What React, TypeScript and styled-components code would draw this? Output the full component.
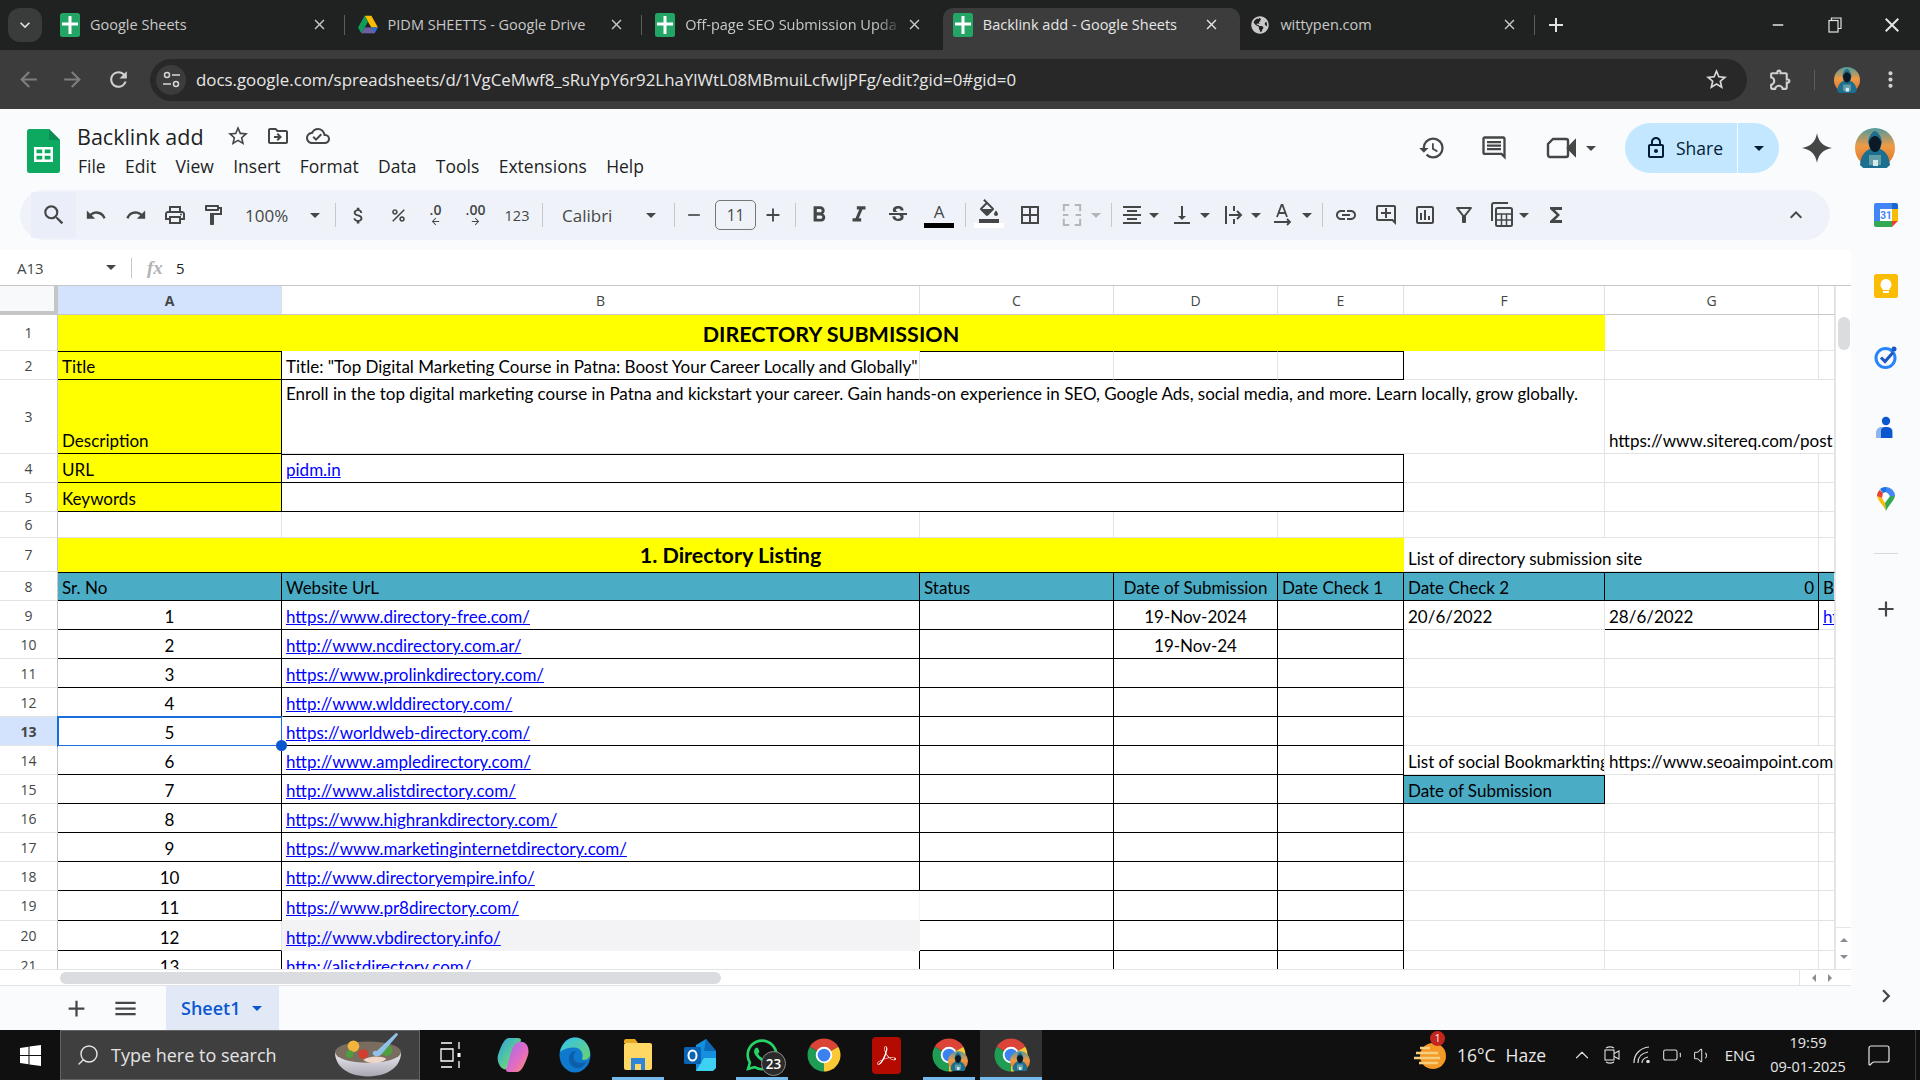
import { FC, ReactNode } from "react";
import styled, { createGlobalStyle } from "styled-components";
import { FaGlobeAmericas, FaWhatsapp } from "react-icons/fa";
import { SiAdobeacrobatreader } from "react-icons/si";
import {
  MdArrowBack,
  MdArrowForward,
  MdAttachMoney,
  MdBorderAll,
  MdClose,
  MdFormatAlignCenter,
  MdFormatBold,
  MdFormatColorFill,
  MdFormatItalic,
  MdStrikethroughS,
  MdFunctions,
  MdHistory,
  MdKeyboardArrowDown,
  MdKeyboardArrowRight,
  MdKeyboardArrowUp,
  MdLink,
  MdLockOutline,
  MdMenu,
  MdMoreVert,
  MdOutlineAddComment,
  MdOutlineCloudDone,
  MdOutlineComment,
  MdOutlineDriveFileMove,
  MdOutlineExtension,
  MdOutlineFilterAlt,
  MdOutlineFormatPaint,
  MdOutlineInsertChart,
  MdOutlinePrint,
  MdAdd,
  MdPercent,
  MdRedo,
  MdRefresh,
  MdRemove,
  MdSearch,
  MdStarOutline,
  MdUndo,
  MdVerticalAlignBottom,
} from "react-icons/md";
import { Battery, ChevronUp, MessageSquare, Search, Volume1 } from "lucide-react";

const GlobalStyle = createGlobalStyle`
  html, body {
    margin: 0;
    padding: 0;
    background: #f9fbfd;
  }
  * {
    box-sizing: border-box;
  }
`;

const UI_FONT = `"Open Sans", "Noto Sans", sans-serif`;
const SHEET_FONT = `Lato, "Liberation Sans", sans-serif`;

const Page = styled.div`
  width: 1920px;
  height: 1080px;
  display: flex;
  flex-direction: column;
  overflow: hidden;
  font-family: ${UI_FONT};
`;

/* browser tabs */
const TabStrip = styled.div`
  height: 50px;
  flex: none;
  display: flex;
  align-items: flex-end;
  padding-left: 8px;
  background: #202221;
`;

const TabListButton = styled.div`
  width: 34px;
  height: 34px;
  margin: 0 8px 8px 0;
  border-radius: 12px;
  background: #3a3b3b;
  color: #e3e3e3;
  display: flex;
  align-items: center;
  justify-content: center;
  font-size: 20px;
`;

const Tab = styled.div<{ $active?: boolean; $sep?: boolean }>`
  position: relative;
  width: 297.6px;
  height: 42px;
  flex: none;
  display: flex;
  align-items: center;
  padding: 0 20px 9px 10px;
  border-radius: 10px 10px 0 0;
  background: ${({ $active }) => ($active ? "#3c3c3c" : "transparent")};
  color: ${({ $active }) => ($active ? "#e6e6e6" : "#c8c8c8")};
  font-size: 14.5px;

  &::after {
    content: "";
    display: ${({ $sep }) => ($sep ? "block" : "none")};
    position: absolute;
    right: 3px;
    top: 7px;
    width: 1px;
    height: 20px;
    background: #5c5e5e;
  }
`;

const TabIcon = styled.div`
  width: 20px;
  height: 22px;
  flex: none;
  display: flex;
  align-items: center;
  justify-content: center;
  margin-right: 10px;
`;

const TabTitle = styled.div<{ $fade?: boolean }>`
  flex: 1;
  white-space: nowrap;
  overflow: hidden;
  mask-image: ${({ $fade }) =>
    $fade ? "linear-gradient(to right, #000 88%, transparent)" : "none"};
`;

const TabClose = styled(MdClose)`
  flex: none;
  font-size: 17px;
  margin-left: 4px;
`;

const NewTab = styled(MdAdd)`
  flex: none;
  color: #e3e3e3;
  font-size: 24px;
  margin: 0 0 13px 6px;
`;

const WindowControls = styled.div`
  margin-left: auto;
  height: 50px;
  display: flex;
  align-items: center;
  color: #e3e3e3;
`;

const WindowButton = styled.div`
  width: 57px;
  display: flex;
  justify-content: center;
  align-items: center;
`;

/* address bar */
const ChromeBar = styled.div`
  height: 59px;
  flex: none;
  display: flex;
  align-items: center;
  background: #3c3c3c;
  color: #c7c7c7;
`;

const NavButton = styled.div<{ $w: number; $dim?: boolean }>`
  width: ${({ $w }) => $w}px;
  flex: none;
  display: flex;
  justify-content: center;
  font-size: 25px;
  color: ${({ $dim }) => ($dim ? "#7d7e7e" : "#d0d0d0")};
`;

const Omnibox = styled.div`
  width: 1597px;
  height: 42px;
  flex: none;
  margin-left: 2px;
  display: flex;
  align-items: center;
  padding: 0 18px 0 6px;
  border-radius: 21px;
  background: #282828;
`;

const SiteButton = styled.div`
  width: 30px;
  height: 30px;
  border-radius: 50%;
  background: #3c3c3c;
  display: flex;
  align-items: center;
  justify-content: center;
  margin-right: 10px;
`;

const UrlText = styled.div`
  flex: 1;
  color: #e6e6e6;
  font-size: 16.85px;
  white-space: nowrap;
`;

const BarSep = styled.div`
  width: 1px;
  height: 20px;
  flex: none;
  background: #5c5e5e;
  margin: 0 19px 0 1px;
`;

/* sheets header */
const AppHeader = styled.div`
  height: 81px;
  flex: none;
  display: flex;
  align-items: center;
  padding: 3px 25px 0 27px;
  background: #f9fbfd;
  color: #444746;
`;

const TitleBlock = styled.div`
  margin-left: 17px;
  display: flex;
  flex-direction: column;
  gap: 0;
`;

const TitleRow = styled.div`
  display: flex;
  align-items: center;
  height: 30px;
  color: #444746;
  font-size: 24px;
`;

const DocTitle = styled.div`
  color: #1f1f1f;
  font-size: 21.5px;
  margin-right: 22px;
`;

const TitleIcon = styled.div`
  width: 40px;
  display: flex;
`;

const MenuBar = styled.div`
  display: flex;
  gap: 19.4px;
  padding-left: 1px;
  height: 30px;
  align-items: center;
  color: #1f1f1f;
  font-size: 17.5px;
`;

const HeaderRight = styled.div`
  margin-left: auto;
  margin-bottom: 6px;
  display: flex;
  align-items: center;
  color: #444746;
`;

const HeadIcon = styled.div<{ $w: number; $ml?: number }>`
  width: ${({ $w }) => $w}px;
  margin-left: ${({ $ml }) => $ml ?? 0}px;
  flex: none;
  display: flex;
  align-items: center;
  justify-content: center;
  font-size: 28px;
`;

const ShareButton = styled.div`
  width: 154px;
  height: 50px;
  margin-left: 26px;
  flex: none;
  display: flex;
  align-items: center;
  border-radius: 25px;
  background: #c2e7ff;
  color: #001d35;
  font-weight: 500;
`;

const ShareMain = styled.div`
  width: 113px;
  height: 100%;
  display: flex;
  align-items: center;
  gap: 8px;
  padding-left: 19px;
  border-right: 1px solid #f9fbfd;
  font-size: 17.5px;
`;

const ShareCaret = styled.div`
  flex: 1;
  display: flex;
  justify-content: center;
`;

/* body */
const Body = styled.div`
  flex: 1;
  min-height: 0;
  display: flex;
`;

const Main = styled.div`
  width: 1851px;
  display: flex;
  flex-direction: column;
`;

const Toolbar = styled.div`
  height: 50px;
  width: 1810px;
  margin-left: 20px;
  flex: none;
  display: flex;
  align-items: center;
  padding: 0 17px 0 11px;
  border-radius: 25px;
  background: #eff3f9;
  color: #444746;
  font-size: 22px;
`;

const Tool = styled.div<{
  $w: number;
  $pl?: number;
  $gap?: number;
  $muted?: boolean;
  $hl?: boolean;
  $push?: boolean;
}>`
  width: ${({ $w }) => $w}px;
  height: 46px;
  flex: none;
  display: flex;
  align-items: center;
  justify-content: ${({ $pl }) => ($pl === undefined ? "center" : "flex-start")};
  margin-left: ${({ $push }) => ($push ? "auto" : "0")};
  padding-left: ${({ $pl }) => $pl ?? 0}px;
  gap: ${({ $gap }) => $gap ?? 0}px;
  color: ${({ $muted }) => ($muted ? "#b4b7b9" : "#444746")};
  background: ${({ $hl }) => ($hl ? "#e9eef8" : "transparent")};
`;

const ToolText = styled.span<{ $size?: number }>`
  font-size: ${({ $size }) => $size ?? 17}px;
  font-family: ${UI_FONT};
  color: #444746;
`;

const ToolSep = styled.div<{ $w: number }>`
  width: ${({ $w }) => $w}px;
  flex: none;
  display: flex;
  justify-content: center;

  &::after {
    content: "";
    width: 1px;
    height: 24px;
    background: #c7c7c7;
  }
`;

const Caret = styled.span<{ $dark?: boolean }>`
  width: 0;
  height: 0;
  flex: none;
  border-left: 5px solid transparent;
  border-right: 5px solid transparent;
  border-top: 5px solid ${({ $dark }) => ($dark ? "#001d35" : "currentColor")};
`;

const SizeBox = styled.div`
  width: 41px;
  height: 30px;
  margin-left: 7px;
  flex: none;
  display: flex;
  align-items: center;
  justify-content: center;
  border: 1px solid #747775;
  border-radius: 5px;
  font-size: 15.5px;
`;

const ColorA = styled.div`
  display: flex;
  flex-direction: column;
  align-items: center;
  font-size: 17px;
  line-height: 19px;
  font-weight: 500;

  &::after {
    content: "";
    width: 30px;
    height: 5px;
    background: #000;
    margin-top: 2px;
  }
`;

const FillSwatch = styled.div`
  display: flex;
  flex-direction: column;
  align-items: center;
  margin-top: -4px;

  &::after {
    content: "";
    width: 30px;
    height: 5px;
    background: #fff;
  }
`;

const Decimal = styled.div`
  display: flex;
  flex-direction: column;
  align-items: center;
  font-size: 14px;
  line-height: 14px;
  font-weight: 600;

  svg {
    margin-top: -1px;
  }
`;

/* formula bar */
const FormulaBar = styled.div`
  height: 36px;
  margin-top: 10px;
  flex: none;
  display: flex;
  align-items: center;
  background: #fff;
  border-bottom: 1px solid #c4c7c5;
  color: #1f1f1f;
  font-size: 15px;
`;

const NameBox = styled.div`
  width: 132px;
  height: 20px;
  display: flex;
  align-items: center;
  justify-content: space-between;
  padding: 0 15px 0 17px;
  border-right: 1px solid #c7c7c7;
  color: #444746;
`;

const FxLabel = styled.span`
  margin-left: 15px;
  width: 29px;
  color: #b0b3b5;
  font-family: "Liberation Serif", serif;
  font-style: italic;
  font-weight: 700;
  font-size: 19px;
`;

/* grid */
const GridArea = styled.div`
  height: 683px;
  flex: none;
  display: flex;
  background: #fff;
`;

const GridClip = styled.div`
  width: 1835px;
  overflow: hidden;
`;

const SheetTable = styled.table`
  width: 1835px;
  table-layout: fixed;
  border-collapse: separate;
  border-spacing: 0;
  font-family: ${SHEET_FONT};
  font-size: 17px;
  color: #000;
`;

const ColHead = styled.th<{ $active?: boolean }>`
  height: 29px;
  padding: 0;
  background: ${({ $active }) => ($active ? "#d3e3fd" : "#fff")};
  border-right: 1px solid #e0e0e0;
  border-bottom: 1px solid #c4c7c5;
  color: #444746;
  font-family: ${UI_FONT};
  font-size: 14px;
  font-weight: ${({ $active }) => ($active ? 700 : 400)};
`;

const Corner = styled.th`
  padding: 0;
  background: #f8f9fa;
  border-right: 4px solid #c4c7c5;
  border-bottom: 4px solid #c4c7c5;
`;

const RowHead = styled.td<{ $active?: boolean; $h: number }>`
  height: ${({ $h }) => $h}px;
  padding: 0;
  text-align: center;
  background: ${({ $active }) => ($active ? "#d3e3fd" : "#fff")};
  border-right: 1px solid #c4c7c5;
  border-bottom: 1px solid #e2e3e3;
  color: #444746;
  font-family: ${UI_FONT};
  font-size: 14px;
  font-weight: ${({ $active }) => ($active ? 700 : 400)};
`;

interface ICellProps {
  $bg?: string;
  $center?: boolean;
  $t?: boolean;
  $r?: boolean;
  $b?: boolean;
  $vtop?: boolean;
  $bold?: boolean;
  $end?: boolean;
  $selected?: boolean;
  $edge?: string;
}

const Cell = styled.td<ICellProps>`
  position: relative;
  padding: ${({ $vtop }) => ($vtop ? "3px 4px 0" : "0 4px 1px")};
  vertical-align: ${({ $vtop }) => ($vtop ? "top" : "bottom")};
  overflow: ${({ $selected }) => ($selected ? "visible" : "hidden")};
  white-space: nowrap;
  line-height: 22px;
  text-align: ${({ $center, $end }) => ($center ? "center" : $end ? "right" : "left")};
  background: ${({ $bg }) => $bg ?? "#fff"};
  font-weight: ${({ $bold }) => ($bold ? 700 : 400)};
  border-top: ${({ $t }) => ($t ? "1px solid #000" : "none")};
  border-right: 1px solid ${({ $r, $edge }) => $edge ?? ($r ? "#000" : "#e2e3e3")};
  border-bottom: 1px solid ${({ $b, $edge }) => $edge ?? ($b ? "#000" : "#e2e3e3")};
  outline: ${({ $selected }) => ($selected ? "2px solid #1a6ddd" : "none")};
  outline-offset: -1px;
`;

const TitleText = styled.span`
  font-size: 21.5px;
  line-height: 30px;
`;

const SheetLink = styled.span`
  color: #0000ff;
  text-decoration: underline;
`;

const FillHandle = styled.span`
  position: absolute;
  right: -6px;
  bottom: -6px;
  width: 11px;
  height: 11px;
  border-radius: 50%;
  background: #0b57d0;
  z-index: 2;
`;

const VScroll = styled.div`
  width: 16px;
  position: relative;
  background: #fff;
  border-left: 1px solid #e6e6e6;
`;

const VThumb = styled.div`
  position: absolute;
  left: 2px;
  top: 31px;
  width: 12px;
  height: 33px;
  border-radius: 6px;
  background: #dadce0;
`;

const VArrows = styled.div`
  position: absolute;
  left: 0;
  right: 0;
  bottom: 0;
  height: 42px;
  display: flex;
  flex-direction: column;
  align-items: center;
  justify-content: space-around;
  border-top: 1px solid #e6e6e6;
`;

const HScroll = styled.div`
  height: 17px;
  flex: none;
  display: flex;
  align-items: center;
  background: #fff;
  border-top: 1px solid #e1e3e6;
  border-bottom: 1px solid #e1e3e6;
`;

const HThumb = styled.div`
  width: 661px;
  height: 12px;
  margin-left: 60px;
  border-radius: 6px;
  background: #dadce0;
`;

const HArrows = styled.div`
  margin-left: auto;
  width: 52px;
  height: 100%;
  display: flex;
  align-items: center;
  gap: 12px;
  padding-left: 8px;
  border-left: 1px solid #e6e6e6;
`;

const TinyArrow = styled.span<{ $dir: "up" | "down" | "left" | "right" }>`
  width: 0;
  height: 0;
  border: 4px solid transparent;
  border-${({ $dir }) => ({ up: "bottom", down: "top", left: "right", right: "left" }[$dir])}-color: #8a8d90;
`;

const SheetBar = styled.div`
  flex: 1;
  display: flex;
  align-items: stretch;
  background: #f9fbfd;
  padding-left: 63px;
  color: #444746;
`;

const SheetBarButton = styled.div`
  width: 49px;
  display: flex;
  align-items: center;
  font-size: 27px;
`;

const SheetTab = styled.div`
  width: 113px;
  margin-left: 5px;
  display: flex;
  align-items: center;
  gap: 12px;
  padding-left: 15px;
  background: #e1e9f7;
  color: #0b57d0;
  font-size: 18px;
  font-weight: 600;
`;

/* right rail */
const SideRail = styled.div`
  flex: 1;
  display: flex;
  flex-direction: column;
  align-items: center;
  padding: 11px 0 21px;
  background: #f9fbfd;
  color: #444746;
`;

const RailIcon = styled.div`
  height: 28px;
  margin-bottom: 43px;
  display: flex;
  align-items: center;
  justify-content: center;
`;

const RailDivider = styled.div`
  width: 24px;
  height: 1px;
  margin: -3px 0 42px;
  background: #d5d7da;
`;

const RailChevron = styled(MdKeyboardArrowRight)`
  margin-top: auto;
  font-size: 26px;
`;

/* windows taskbar */
const Taskbar = styled.div`
  height: 50px;
  flex: none;
  display: flex;
  align-items: stretch;
  background: #101010;
  color: #e8e8e8;
`;

const StartButton = styled.div`
  width: 60px;
  display: flex;
  align-items: center;
  justify-content: center;
`;

const SearchBox = styled.div`
  width: 360px;
  display: flex;
  align-items: center;
  padding: 0 15px;
  background: #3f3f3f;
  border: 1px solid #636363;
  color: #e4e4e4;
  font-size: 18px;
`;

const SearchGlass = styled(Search)`
  transform: scaleX(-1);
`;

const SearchText = styled.span`
  margin-left: 11px;
  flex: 1;
`;

const TaskItem = styled.div<{ $on?: boolean; $active?: boolean }>`
  position: relative;
  width: 62.2px;
  flex: none;
  display: flex;
  align-items: center;
  justify-content: center;
  background: ${({ $active }) => ($active ? "#333" : "transparent")};

  &::after {
    content: "";
    display: ${({ $on, $active }) => ($on || $active ? "block" : "none")};
    position: absolute;
    bottom: 0;
    left: ${({ $active }) => ($active ? 0 : 5)}px;
    right: ${({ $active }) => ($active ? 0 : 5)}px;
    height: 3px;
    background: #76b9ed;
  }
`;

const AcrobatTile = styled.div`
  width: 29px;
  height: 37px;
  border-radius: 4px;
  background: #b30b00;
  color: #fff;
  display: flex;
  align-items: center;
  justify-content: center;
  font-size: 19px;
`;

const CountBadge = styled.span`
  position: absolute;
  left: 30px;
  top: 21px;
  width: 25px;
  height: 25px;
  border-radius: 50%;
  background: #2b2b2b;
  border: 1px solid #8b8b8b;
  display: flex;
  align-items: center;
  justify-content: center;
  color: #fff;
  font-size: 13.5px;
  font-weight: 600;
`;

const ProfileBadge = styled.span`
  position: absolute;
  left: 30px;
  top: 21px;
  line-height: 0;
`;

const Tray = styled.div`
  margin-left: auto;
  display: flex;
  align-items: center;
`;

const WeatherBox = styled.div`
  width: 40px;
  position: relative;
  display: flex;
  justify-content: center;
`;

const WeatherBadge = styled.span`
  position: absolute;
  left: 20px;
  top: -9px;
  width: 15px;
  height: 15px;
  border-radius: 50%;
  background: #c4261d;
  color: #fff;
  font-size: 10px;
  line-height: 15px;
  text-align: center;
`;

const TempText = styled.div`
  width: 117px;
  padding-left: 7px;
  display: flex;
  gap: 10px;
  font-size: 17.5px;
`;

const TrayIcon = styled.div`
  width: 30px;
  display: flex;
  justify-content: center;
  color: #dcdcdc;
`;

const LangText = styled.div`
  width: 46px;
  text-align: center;
  font-size: 15px;
`;

const ClockBox = styled.div`
  width: 90px;
  text-align: center;
  font-size: 14.5px;
  line-height: 24px;
`;

const NoticeBox = styled.div`
  width: 52px;
  display: flex;
  justify-content: center;
`;

const DesktopEdge = styled.div`
  width: 15px;
  height: 50px;
  position: relative;

  &::after {
    content: "";
    position: absolute;
    left: 10px;
    top: 0;
    bottom: 0;
    width: 1px;
    background: #3a3a3a;
  }
`;

/* small drawings */
const SheetsFavicon: FC = () => (
  <svg width="20" height="24" viewBox="0 0 20 24">
    <rect width="20" height="24" rx="2.5" fill="#23a566" />
    <path d="M8.5 3h3v6.5H18v3h-6.5V21h-3v-8.5H2v-3h6.5z" fill="#fff" />
  </svg>
);

const DriveIcon: FC = () => (
  <svg width="20" height="20" viewBox="0 0 24 22">
    <path d="M8 0h8l8 14h-8z" fill="#fbbc04" />
    <path d="M8 0 0 14l4 7 8-14z" fill="#0f9d58" />
    <path d="M4 21h16l4-7H8z" fill="#2a6fdb" />
    <path d="M8 14h8l4 7H4z" fill="#ea4335" opacity="0.35" />
  </svg>
);

const SheetsLogo: FC = () => (
  <svg width="33" height="44" viewBox="0 0 33 44">
    <path d="M2.5 0H22l11 11v30.500a2.500 2.500 0 0 1-2.500 2.500h-28A2.500 2.500 0 0 1 0 41.500v-39A2.500 2.500 0 0 1 2.500 0z" fill="#0da960" />
    <path d="M22 0l11 11H22z" fill="#0a8d50" />
    <path d="M7 18h19v15H7zm2.500 2.500v3.800h5.700v-3.800zm8.200 0v3.800h5.800v-3.800zm-8.200 6.300v3.700h5.700v-3.700zm8.200 0v3.700h5.800v-3.700z" fill="#fff" fillRule="evenodd" />
  </svg>
);

const GeminiStar: FC = () => (
  <svg width="30" height="30" viewBox="0 0 30 30">
    <path d="M15 0c1.200 8.500 6.500 13.800 15 15-8.500 1.200-13.800 6.500-15 15-1.200-8.500-6.500-13.800-15-15C8.500 13.800 13.800 8.500 15 0z" fill="#444746" />
  </svg>
);

const Avatar: FC<{ size: number }> = ({ size }) => (
  <svg width={size} height={size} viewBox="0 0 40 40">
    <defs>
      <linearGradient id="avatarSky" x1="0" y1="0" x2="0" y2="1">
        <stop offset="0" stopColor="#4f9aa0" />
        <stop offset="0.45" stopColor="#ef9a45" />
        <stop offset="1" stopColor="#d9702c" />
      </linearGradient>
    </defs>
    <circle cx="20" cy="20" r="20" fill="url(#avatarSky)" />
    <path d="M5 37c1-10 5-14 10-16l-2-7c1-7 5-11 7-11s6 4 7 11l-2 7c5 2 9 6 10 16a20 20 0 0 1-30 0z" fill="#1d6f8f" />
    <path d="M14 14c1-4 4-6 6-6s5 2 6 6c0 5-2 10-6 10s-6-5-6-10z" fill="#0b1a26" />
    <rect x="14" y="27" width="12" height="10" fill="#74a7ad" opacity="0.8" />
    <rect x="18" y="32" width="5" height="6" fill="#d7e8ea" />
  </svg>
);

const ChromeLogo: FC<{ size: number }> = ({ size }) => (
  <svg width={size} height={size} viewBox="0 0 48 48">
    <path d="M24 24 4.950 13A22 22 0 0 1 43.050 13z" fill="#db4437" />
    <path d="M24 24 43.050 13A22 22 0 0 1 24 46z" fill="#fcc934" />
    <path d="M24 24V46A22 22 0 0 1 4.950 13z" fill="#1f9d55" />
    <circle cx="24" cy="24" r="11" fill="#fff" />
    <circle cx="24" cy="24" r="8.500" fill="#3b82f0" />
  </svg>
);

const StartLogo: FC = () => (
  <svg width="21" height="21" viewBox="0 0 21 21">
    <path d="M0 3l8.500-1.200v8.200H0zM9.500 1.600 21 0v10H9.500zM0 11h8.500v8.200L0 18zM9.500 11H21v10l-11.500-1.600z" fill="#fff" />
  </svg>
);

const TaskViewIcon: FC = () => (
  <svg width="22" height="28" viewBox="0 0 22 28" fill="none" stroke="#fff" strokeWidth="1.300">
    <path d="M1 2h11M1 26h11M1 8h12v12H1zM19 1v7M19 20v7" />
    <rect x="17.500" y="12" width="3" height="4" fill="#fff" stroke="none" />
  </svg>
);

const CopilotIcon: FC = () => (
  <svg width="32" height="36" viewBox="0 0 32 36">
    <defs>
      <linearGradient id="copA" x1="0" y1="0" x2="1" y2="1">
        <stop offset="0" stopColor="#2a9fe8" />
        <stop offset="0.6" stopColor="#5fd08a" />
        <stop offset="1" stopColor="#f5c33b" />
      </linearGradient>
      <linearGradient id="copB" x1="0" y1="0" x2="1" y2="1">
        <stop offset="0" stopColor="#9b6cf0" />
        <stop offset="0.6" stopColor="#e66cc2" />
        <stop offset="1" stopColor="#f59a52" />
      </linearGradient>
    </defs>
    <path d="M12 1h9c2 0 3 1 3 2l-4 14c-2 8-4 13-10 15-2 1-5 0-7-3C0 24 0 20 2 15 5 7 8 1 12 1z" fill="url(#copA)" />
    <path d="M20 35h-8c-2 0-3-1-3-2l4-14c2-8 4-13 9-14 3-1 6 0 8 3 2 4 2 8 0 13-3 8-6 14-10 14z" fill="url(#copB)" />
  </svg>
);

const EdgeIcon: FC = () => (
  <svg width="32" height="36" viewBox="0 0 32 36">
    <defs>
      <linearGradient id="edgeA" x1="0" y1="0" x2="1" y2="1">
        <stop offset="0" stopColor="#35c1f1" />
        <stop offset="1" stopColor="#6ad36b" />
      </linearGradient>
    </defs>
    <ellipse cx="16" cy="18" rx="15.500" ry="17.500" fill="#0f79cf" />
    <path d="M1 15C3 6 9 .5 16 .5c9 0 15 8 15 17 0 4-4 6-8 5 2-6-1-12-8-12-6 0-11 2-14 4.500z" fill="url(#edgeA)" />
    <path d="M21 31c-7 1-12-4-11-11 1-4 4-6 7-6-2 2-3 5-2 8 1 4 6 5 12 3-1 2-3 5-6 6z" fill="#0c5fa8" />
  </svg>
);

const FolderIcon: FC = () => (
  <svg width="28" height="34" viewBox="0 0 28 34">
    <path d="M0 3a2 2 0 0 1 2-2h9l3 4H0z" fill="#e8a820" />
    <rect y="5" width="28" height="27" rx="2" fill="#ffd764" />
    <path d="M7 32V20h14v12h-4v-6h-6v6z" fill="#2f86d8" />
  </svg>
);

const OutlookIcon: FC = () => (
  <svg width="32" height="34" viewBox="0 0 32 34">
    <path d="M12 7 22 1l10 12v17l-6 3H12z" fill="#1490df" />
    <path d="M20 20h12v10l-3 3H12z" fill="#3ed1f4" />
    <path d="M22 1l10 12H20z" fill="#0d6ab8" />
    <rect y="9" width="17" height="17" rx="1.500" fill="#0a63b4" />
    <ellipse cx="8.500" cy="17.500" rx="4" ry="5" fill="none" stroke="#fff" strokeWidth="2" />
  </svg>
);

const BowlEmoji: FC = () => (
  <svg width="70" height="46" viewBox="0 0 72 46">
    <defs>
      <linearGradient id="bowl" x1="0" y1="0" x2="0" y2="1">
        <stop offset="0" stopColor="#ecebf0" />
        <stop offset="1" stopColor="#a9a7b3" />
      </linearGradient>
    </defs>
    <path d="M1 20h68c0 14-12 25-34 25S1 34 1 20z" fill="url(#bowl)" />
    <ellipse cx="35" cy="20" rx="34" ry="11" fill="#7a6c5f" />
    <circle cx="20" cy="14" r="6" fill="#f2b53c" />
    <circle cx="30" cy="22" r="5" fill="#d33e30" />
    <circle cx="16" cy="22" r="4" fill="#4f9d3f" />
    <circle cx="54" cy="18" r="6" fill="#4f9d3f" />
    <path d="M30 28c5-4 18-5 24-1-6 5-18 6-24 1z" fill="#f0d6c8" />
    <path d="M44 19 64 0l2 2-17 20c-2 3-8 3-9 0s2-4 4-3z" fill="#8fc1e8" />
  </svg>
);

const MergeIcon: FC = () => (
  <svg width="20" height="22" viewBox="0 0 22 24" fill="none" stroke="#b4b7b9" strokeWidth="2.200">
    <path d="M8 1H2v7M14 1h6v7M8 23H2v-7M14 23h6v-7M1 12h6M21 12h-6" />
  </svg>
);

const WrapIcon: FC = () => (
  <svg width="24" height="24" viewBox="0 0 24 24" fill="none" stroke="#444746" strokeWidth="2">
    <path d="M4 3v18M12 3v5M12 16v5M7 12h12M15 8l4 4-4 4" />
  </svg>
);

const RotateIcon: FC = () => (
  <svg width="24" height="24" viewBox="0 0 24 24" fill="none" stroke="#444746" strokeWidth="1.800">
    <path d="M6 14 10.500 2h1L16 14M7.500 10h7M3 19h16M16 16l3 3-3 3" />
  </svg>
);

const TablesIcon: FC = () => (
  <svg width="24" height="26" viewBox="0 0 24 26" fill="none" stroke="#444746" strokeWidth="2">
    <path d="M2 19V3a2 2 0 0 1 2-2h14" />
    <rect x="6" y="6" width="16" height="18" rx="1.500" />
    <path d="M6 12h16M6 18h16M11.500 12v12M16.500 12v12" strokeWidth="1.500" />
  </svg>
);

const MeetIcon: FC = () => (
  <svg width="30" height="26" viewBox="0 0 30 26" fill="none" stroke="#444746" strokeWidth="2.400">
    <path d="M7 4h13a2 2 0 0 1 2 2v14a2 2 0 0 1-2 2H4a2 2 0 0 1-2-2V9z" />
    <path d="M22 13l7-7v14z" fill="#444746" />
  </svg>
);

const TuneGlyph: FC = () => (
  <svg width="17" height="17" viewBox="0 0 17 17" fill="none" stroke="#d6d6d6" strokeWidth="1.500">
    <circle cx="4" cy="4" r="2.500" />
    <circle cx="13" cy="13" r="2.500" />
    <path d="M9 4h8M0 13h8" />
  </svg>
);

const RestoreGlyph: FC = () => (
  <svg width="14" height="16" viewBox="0 0 14 16" fill="none" stroke="#e3e3e3" strokeWidth="1.200">
    <rect x="1" y="3.500" width="9" height="11.500" />
    <path d="M3.500 3.500V1H13v10.500h-3" />
  </svg>
);

const CalendarIcon: FC = () => (
  <svg width="24" height="24" viewBox="0 0 24 24">
    <path d="M2 0h20a2 2 0 0 1 2 2v16l-6 6H2a2 2 0 0 1-2-2V2a2 2 0 0 1 2-2z" fill="#fff" />
    <path d="M6 0h12v6H6z" fill="#4285f4" />
    <path d="M2 0h4v6H0V2a2 2 0 0 1 2-2zM0 6h6v12H0z" fill="#4285f4" />
    <path d="M0 18h18v6H2a2 2 0 0 1-2-2z" fill="#34a853" />
    <path d="M18 6h6v12h-6z" fill="#fbbc04" />
    <path d="M18 0h4a2 2 0 0 1 2 2v4h-6z" fill="#1967d2" />
    <path d="M18 18h6l-6 6z" fill="#ea4335" />
    <text x="12" y="16" textAnchor="middle" fontSize="10" fontWeight="700" fill="#4285f4" fontFamily="Roboto, sans-serif">31</text>
  </svg>
);

const KeepIcon: FC = () => (
  <svg width="24" height="24" viewBox="0 0 24 24">
    <rect width="24" height="24" rx="2.500" fill="#fbbc04" />
    <path d="M12 5a5.500 5.500 0 0 1 3.500 9.700V16h-7v-1.300A5.500 5.500 0 0 1 12 5z" fill="#fff" />
    <rect x="9" y="17" width="6" height="2" fill="#fff" />
  </svg>
);

const TasksIcon: FC = () => (
  <svg width="24" height="24" viewBox="0 0 24 24" fill="none">
    <circle cx="11.500" cy="13" r="9.500" stroke="#2684fc" strokeWidth="3" />
    <path d="M7 12.500l4 4 8-9" stroke="#1a56c4" strokeWidth="3" />
    <circle cx="20" cy="4" r="2.500" fill="#1a56c4" />
  </svg>
);

const ContactsIcon: FC = () => (
  <svg width="20" height="24" viewBox="0 0 20 24">
    <circle cx="10" cy="5" r="4.200" fill="#0b57d0" />
    <path d="M0 22v-5c0-4 3-6 5-6h6c4 0 6 2 6 6v5z" fill="#8fb5ef" />
    <path d="M5 22v-7c0-3 2-4 5-4s6 1 6 4v7z" fill="#0b57d0" />
  </svg>
);

const MapsIcon: FC = () => (
  <svg width="18" height="24" viewBox="0 0 18 24">
    <path d="M9 24C7 19 1 14 0 9l5 2 3 5z" fill="#fbbc04" />
    <path d="M9 24c2-5 8-10 9-15H13l-5 7z" fill="#34a853" />
    <path d="M9 0a9 9 0 0 1 9 9h-5L9 5z" fill="#4285f4" />
    <path d="M0 9a9 9 0 0 1 2.700-6.300L6 6 5 11z" fill="#ea4335" />
    <path d="M3 2a9 9 0 0 1 6-2v5L6 6z" fill="#1a73e8" />
    <circle cx="9" cy="9" r="3" fill="#fff" />
  </svg>
);

const WeatherIcon: FC = () => (
  <svg width="32" height="30" viewBox="0 0 32 30">
    <circle cx="19" cy="16" r="13" fill="#f39a27" />
    <path d="M2 13h22M0 18h26M5 23h19M6 8h10" stroke="#f6cf7e" strokeWidth="2.500" />
  </svg>
);

const VideoTray: FC = () => (
  <svg width="16" height="20" viewBox="0 0 16 20" fill="none" stroke="#dcdcdc" strokeWidth="1.100">
    <rect x="1" y="5" width="9" height="10" />
    <path d="M10 8.500l5-2.500v8l-5-2.500M2 3a8 8 0 0 1 8 0M2 17a8 8 0 0 0 8 0" />
  </svg>
);

const WifiTray: FC = () => (
  <svg width="18" height="18" viewBox="0 0 18 18" fill="none" stroke="#dcdcdc" strokeWidth="1.200">
    <path d="M1 17C1 8 7 2 16 1M5 17c0-6 4-10 10-11M9 17c0-3 2-5 6-6" />
    <circle cx="15" cy="15.500" r="1.800" fill="#dcdcdc" stroke="none" />
  </svg>
);

const SMALL_CARET = <Caret />;

const Toolbars: FC = () => (
  <Toolbar>
    <Tool $w={45} $hl><MdSearch size={26} /></Tool>
    <Tool $w={40}><MdUndo /></Tool>
    <Tool $w={40}><MdRedo /></Tool>
    <Tool $w={38}><MdOutlinePrint size={24} /></Tool>
    <Tool $w={38}><MdOutlineFormatPaint size={24} /></Tool>
    <Tool $w={100} $pl={13} $gap={22}><ToolText>100%</ToolText>{SMALL_CARET}</Tool>
    <ToolSep $w={7} />
    <Tool $w={39}><MdAttachMoney size={21} /></Tool>
    <Tool $w={40}><MdPercent size={19} /></Tool>
    <Tool $w={35}><Decimal>.0<MdArrowBack size={11} /></Decimal></Tool>
    <Tool $w={45}><Decimal>.00<MdArrowForward size={11} /></Decimal></Tool>
    <Tool $w={38}><ToolText $size={14.5}>123</ToolText></Tool>
    <ToolSep $w={12} />
    <Tool $w={120} $pl={14} $gap={34}><ToolText $size={17}>Calibri</ToolText>{SMALL_CARET}</Tool>
    <ToolSep $w={12} />
    <Tool $w={28}><MdRemove size={20} /></Tool>
    <SizeBox>11</SizeBox>
    <Tool $w={34}><MdAdd size={22} /></Tool>
    <ToolSep $w={10} />
    <Tool $w={38}><MdFormatBold size={26} /></Tool>
    <Tool $w={42}><MdFormatItalic size={26} /></Tool>
    <Tool $w={36}><MdStrikethroughS size={24} /></Tool>
    <Tool $w={46}><ColorA>A</ColorA></Tool>
    <ToolSep $w={6} />
    <Tool $w={42}><FillSwatch><MdFormatColorFill size={24} /></FillSwatch></Tool>
    <Tool $w={40}><MdBorderAll size={24} /></Tool>
    <Tool $w={56} $pl={12} $gap={9} $muted><MergeIcon />{SMALL_CARET}</Tool>
    <ToolSep $w={10} />
    <Tool $w={50} $pl={4} $gap={5}><MdFormatAlignCenter size={24} />{SMALL_CARET}</Tool>
    <Tool $w={50} $pl={4} $gap={6}><MdVerticalAlignBottom size={24} />{SMALL_CARET}</Tool>
    <Tool $w={50} $pl={6} $gap={5}><WrapIcon />{SMALL_CARET}</Tool>
    <Tool $w={50} $pl={5} $gap={7}><RotateIcon />{SMALL_CARET}</Tool>
    <ToolSep $w={12} />
    <Tool $w={36}><MdLink size={24} /></Tool>
    <Tool $w={44}><MdOutlineAddComment size={24} /></Tool>
    <Tool $w={34}><MdOutlineInsertChart size={24} /></Tool>
    <Tool $w={44}><MdOutlineFilterAlt size={24} /></Tool>
    <Tool $w={48} $pl={4} $gap={5}><TablesIcon />{SMALL_CARET}</Tool>
    <Tool $w={44}><MdFunctions size={24} /></Tool>
    <Tool $w={34} $push><MdKeyboardArrowUp size={24} /></Tool>
  </Toolbar>
);

const COL_WIDTHS = [58, 224, 638, 194, 164, 126, 201, 214, 16];
const COL_NAMES = ["A", "B", "C", "D", "E", "F", "G", ""];
const YELLOW = "#ffff00";
const TEAL = "#4bacc6";
const HOVER = "#f3f3f5";

const ROW_HEIGHTS: Record<number, number> = {
  1: 36, 3: 74, 6: 26, 7: 34, 19: 30, 20: 30,
};

const LINKS = [
  "https://www.directory-free.com/",
  "http://www.ncdirectory.com.ar/",
  "https://www.prolinkdirectory.com/",
  "http://www.wlddirectory.com/",
  "https://worldweb-directory.com/",
  "http://www.ampledirectory.com/",
  "http://www.alistdirectory.com/",
  "https://www.highrankdirectory.com/",
  "https://www.marketinginternetdirectory.com/",
  "http://www.directoryempire.info/",
  "https://www.pr8directory.com/",
  "http://www.vbdirectory.info/",
  "http://alistdirectory.com/",
];

const Row: FC<{ n: number; children: ReactNode }> = ({ n, children }) => (
  <tr>
    <RowHead $active={n === 13} $h={ROW_HEIGHTS[n] ?? 29}>{n}</RowHead>
    {children}
  </tr>
);

const TopRows: FC = () => (
  <>
    <Row n={1}>
      <Cell colSpan={6} $bg={YELLOW} $center $bold $edge={YELLOW}>
        <TitleText>DIRECTORY SUBMISSION</TitleText>
      </Cell>
      <Cell />
      <Cell />
    </Row>
    <Row n={2}>
      <Cell $bg={YELLOW} $t $r $b>Title</Cell>
      <Cell $b>Title: "Top Digital Marketing Course in Patna: Boost Your Career Locally and Globally"</Cell>
      <Cell $t $b />
      <Cell $t $b />
      <Cell $t $b $r />
      <Cell />
      <Cell />
      <Cell />
    </Row>
    <Row n={3}>
      <Cell $bg={YELLOW} $r $b>Description</Cell>
      <Cell colSpan={5} $vtop>
        Enroll in the top digital marketing course in Patna and kickstart your career. Gain hands-on experience in SEO, Google Ads, social media, and more. Learn locally, grow globally.
      </Cell>
      <Cell colSpan={2}>https://www.sitereq.com/post</Cell>
    </Row>
    <Row n={4}>
      <Cell $bg={YELLOW} $r $b>URL</Cell>
      <Cell colSpan={4} $t $r $b><SheetLink>pidm.in</SheetLink></Cell>
      <Cell />
      <Cell />
      <Cell />
    </Row>
    <Row n={5}>
      <Cell $bg={YELLOW} $r $b>Keywords</Cell>
      <Cell colSpan={4} $r $b />
      <Cell />
      <Cell />
      <Cell />
    </Row>
    <Row n={6}>
      {Array.from({ length: 8 }, (_, i) => <Cell key={i} />)}
    </Row>
    <Row n={7}>
      <Cell colSpan={5} $bg={YELLOW} $center $bold $edge={YELLOW}>
        <TitleText>1. Directory Listing</TitleText>
      </Cell>
      <Cell colSpan={2}>List of directory submission site</Cell>
      <Cell />
    </Row>
    <Row n={8}>
      <Cell $bg={TEAL} $t $r $b>Sr. No</Cell>
      <Cell $bg={TEAL} $t $r $b>Website UrL</Cell>
      <Cell $bg={TEAL} $t $r $b>Status</Cell>
      <Cell $bg={TEAL} $t $r $b $center>Date of Submission</Cell>
      <Cell $bg={TEAL} $t $r $b>Date Check 1</Cell>
      <Cell $bg={TEAL} $t $r $b>Date Check 2</Cell>
      <Cell $bg={TEAL} $t $r $b $end>0</Cell>
      <Cell $bg={TEAL} $t $b>Ba</Cell>
    </Row>
  </>
);

const ListRows: FC = () => (
  <>
    {LINKS.map((link, i) => {
      const n = i + 9;
      const hovered = n === 20;
      return (
        <Row key={link} n={n}>
          <Cell $center $r={!hovered} $b $selected={n === 13}>
            {i + 1}
            {n === 13 && <FillHandle />}
          </Cell>
          <Cell
            $r={!hovered}
            $b={n !== 19 && !hovered}
            $bg={hovered ? HOVER : undefined}
            $edge={n === 19 || hovered ? HOVER : undefined}
          >
            <SheetLink>{link}</SheetLink>
          </Cell>
          <Cell $r $b />
          <Cell $r $b $center>{n === 9 ? "19-Nov-2024" : n === 10 ? "19-Nov-24" : ""}</Cell>
          <Cell $r $b />
          {n === 14 ? <Cell>List of social Bookmarkting</Cell>
            : n === 15 ? <Cell $bg={TEAL} $t $r $b>Date of Submission</Cell>
            : n === 9 ? <Cell>20/6/2022</Cell>
            : <Cell />}
          {n === 14 ? <Cell colSpan={2}>https://www.seoaimpoint.com</Cell>
            : n === 9 ? <Cell $r $b>28/6/2022</Cell>
            : <Cell />}
          {n === 14 ? null : n === 9 ? <Cell><SheetLink>http</SheetLink></Cell> : <Cell />}
        </Row>
      );
    })}
  </>
);

const Grid: FC = () => (
  <GridArea>
    <GridClip>
      <SheetTable>
        <colgroup>
          {COL_WIDTHS.map((w, i) => <col key={i} width={w} />)}
        </colgroup>
        <thead>
          <tr>
            <Corner />
            {COL_NAMES.map((c) => <ColHead key={c} $active={c === "A"}>{c}</ColHead>)}
          </tr>
        </thead>
        <tbody>
          <TopRows />
          <ListRows />
        </tbody>
      </SheetTable>
    </GridClip>
    <VScroll>
      <VThumb />
      <VArrows>
        <TinyArrow $dir="up" />
        <TinyArrow $dir="down" />
      </VArrows>
    </VScroll>
  </GridArea>
);

const App: FC = () => (
  <Page>
    <GlobalStyle />
    <TabStrip>
      <TabListButton><MdKeyboardArrowDown /></TabListButton>
      <Tab $sep>
        <TabIcon><SheetsFavicon /></TabIcon>
        <TabTitle>Google Sheets</TabTitle>
        <TabClose />
      </Tab>
      <Tab $sep>
        <TabIcon><DriveIcon /></TabIcon>
        <TabTitle>PIDM SHEETTS - Google Drive</TabTitle>
        <TabClose />
      </Tab>
      <Tab>
        <TabIcon><SheetsFavicon /></TabIcon>
        <TabTitle $fade>Off-page SEO Submission Upda</TabTitle>
        <TabClose />
      </Tab>
      <Tab $active>
        <TabIcon><SheetsFavicon /></TabIcon>
        <TabTitle>Backlink add - Google Sheets</TabTitle>
        <TabClose />
      </Tab>
      <Tab $sep>
        <TabIcon><FaGlobeAmericas size={18} color="#c8c8c8" /></TabIcon>
        <TabTitle>wittypen.com</TabTitle>
        <TabClose />
      </Tab>
      <NewTab />
      <WindowControls>
        <WindowButton><MdRemove size={18} /></WindowButton>
        <WindowButton><RestoreGlyph /></WindowButton>
        <WindowButton><MdClose size={24} /></WindowButton>
      </WindowControls>
    </TabStrip>

    <ChromeBar>
      <NavButton $w={56} $dim><MdArrowBack /></NavButton>
      <NavButton $w={32} $dim><MdArrowForward /></NavButton>
      <NavButton $w={60}><MdRefresh /></NavButton>
      <Omnibox>
        <SiteButton><TuneGlyph /></SiteButton>
        <UrlText>docs.google.com/spreadsheets/d/1VgCeMwf8_sRuYpY6r92LhaYlWtL08MBmuiLcfwIjPFg/edit?gid=0#gid=0</UrlText>
        <MdStarOutline size={25} color="#d8d8d8" />
      </Omnibox>
      <NavButton $w={66}><MdOutlineExtension /></NavButton>
      <BarSep />
      <Avatar size={26} />
      <NavButton $w={60}><MdMoreVert /></NavButton>
    </ChromeBar>

    <AppHeader>
      <SheetsLogo />
      <TitleBlock>
        <TitleRow>
          <DocTitle>Backlink add</DocTitle>
          <TitleIcon><MdStarOutline /></TitleIcon>
          <TitleIcon><MdOutlineDriveFileMove /></TitleIcon>
          <TitleIcon><MdOutlineCloudDone /></TitleIcon>
        </TitleRow>
        <MenuBar>
          <span>File</span>
          <span>Edit</span>
          <span>View</span>
          <span>Insert</span>
          <span>Format</span>
          <span>Data</span>
          <span>Tools</span>
          <span>Extensions</span>
          <span>Help</span>
        </MenuBar>
      </TitleBlock>
      <HeaderRight>
        <HeadIcon $w={62}><MdHistory /></HeadIcon>
        <HeadIcon $w={62}><MdOutlineComment /></HeadIcon>
        <HeadIcon $w={44} $ml={14}><MeetIcon /></HeadIcon>
        <HeadIcon $w={16}><Caret /></HeadIcon>
        <ShareButton>
          <ShareMain><MdLockOutline size={24} />Share</ShareMain>
          <ShareCaret><Caret $dark /></ShareCaret>
        </ShareButton>
        <HeadIcon $w={76}><GeminiStar /></HeadIcon>
        <Avatar size={40} />
      </HeaderRight>
    </AppHeader>

    <Body>
      <Main>
        <Toolbars />
        <FormulaBar>
          <NameBox>A13<Caret /></NameBox>
          <FxLabel>fx</FxLabel>
          5
        </FormulaBar>
        <Grid />
        <HScroll>
          <HThumb />
          <HArrows>
            <TinyArrow $dir="left" />
            <TinyArrow $dir="right" />
          </HArrows>
        </HScroll>
        <SheetBar>
          <SheetBarButton><MdAdd /></SheetBarButton>
          <SheetBarButton><MdMenu /></SheetBarButton>
          <SheetTab>Sheet1<Caret /></SheetTab>
        </SheetBar>
      </Main>
      <SideRail>
        <RailIcon><CalendarIcon /></RailIcon>
        <RailIcon><KeepIcon /></RailIcon>
        <RailIcon><TasksIcon /></RailIcon>
        <RailIcon><ContactsIcon /></RailIcon>
        <RailIcon><MapsIcon /></RailIcon>
        <RailDivider />
        <MdAdd size={26} />
        <RailChevron />
      </SideRail>
    </Body>

    <Taskbar>
      <StartButton><StartLogo /></StartButton>
      <SearchBox>
        <SearchGlass size={24} strokeWidth={1.4} />
        <SearchText>Type here to search</SearchText>
        <BowlEmoji />
      </SearchBox>
      <TaskItem><TaskViewIcon /></TaskItem>
      <TaskItem><CopilotIcon /></TaskItem>
      <TaskItem><EdgeIcon /></TaskItem>
      <TaskItem $on><FolderIcon /></TaskItem>
      <TaskItem><OutlookIcon /></TaskItem>
      <TaskItem $on>
        <FaWhatsapp size={36} color="#25d366" />
        <CountBadge>23</CountBadge>
      </TaskItem>
      <TaskItem><ChromeLogo size={36} /></TaskItem>
      <TaskItem><AcrobatTile><SiAdobeacrobatreader /></AcrobatTile></TaskItem>
      <TaskItem $on>
        <ChromeLogo size={36} />
        <ProfileBadge><Avatar size={20} /></ProfileBadge>
      </TaskItem>
      <TaskItem $active>
        <ChromeLogo size={36} />
        <ProfileBadge><Avatar size={20} /></ProfileBadge>
      </TaskItem>
      <Tray>
        <WeatherBox>
          <WeatherIcon />
          <WeatherBadge>1</WeatherBadge>
        </WeatherBox>
        <TempText><span>16°C</span><span>Haze</span></TempText>
        <TrayIcon><ChevronUp size={22} strokeWidth={1.3} /></TrayIcon>
        <TrayIcon><VideoTray /></TrayIcon>
        <TrayIcon><WifiTray /></TrayIcon>
        <TrayIcon><Battery size={20} strokeWidth={1.3} /></TrayIcon>
        <TrayIcon><Volume1 size={19} strokeWidth={1.3} /></TrayIcon>
        <LangText>ENG</LangText>
        <ClockBox>19:59<br />09-01-2025</ClockBox>
        <NoticeBox><MessageSquare size={24} strokeWidth={1.2} /></NoticeBox>
        <DesktopEdge />
      </Tray>
    </Taskbar>
  </Page>
);

export default App;
